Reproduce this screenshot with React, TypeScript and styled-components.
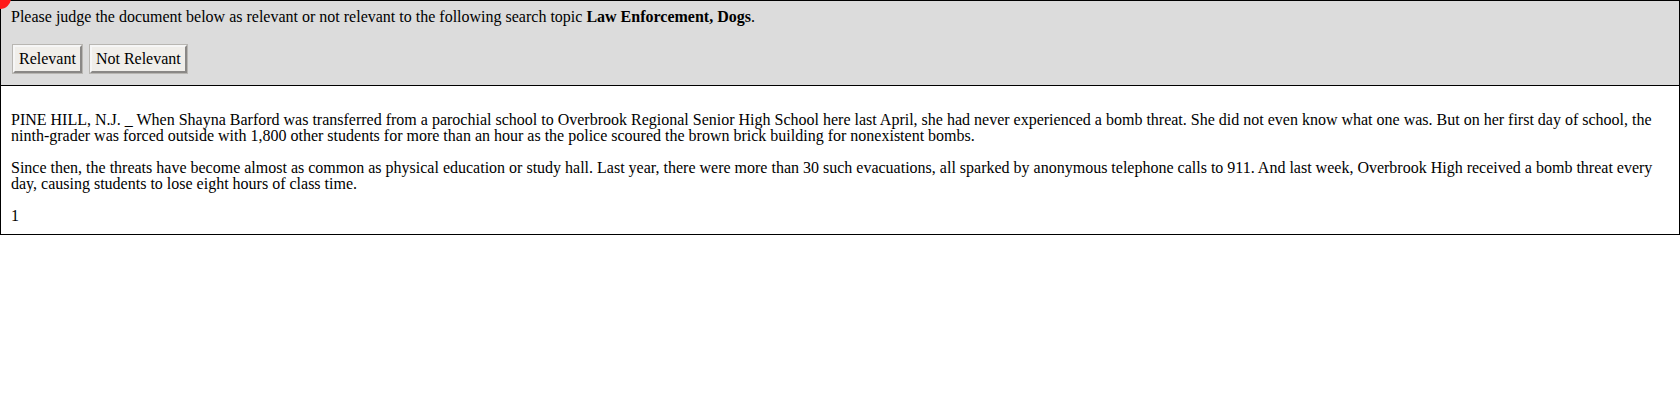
import React from "react";
import styled, { createGlobalStyle } from "styled-components";

const Global = createGlobalStyle`
  html, body { margin: 0; padding: 0; background: #fff; }
  body { font-family: "Liberation Serif", "Times New Roman", serif; font-size: 16px; color: #000; }
  * { box-sizing: border-box; }
`;

const Frame = styled.div`
  position: relative;
  width: 1680px;
  border: 1px solid #000;
`;

const Marker = styled.span`
  position: absolute;
  left: -12px;
  top: -14px;
  width: 22px;
  height: 22px;
  border-radius: 50%;
  background: #ff1a1a;
  z-index: 1;
`;

const Header = styled.div`
  background: #dcdcdc;
  border-bottom: 1px solid #000;
  padding: 8px 10px 12px 10px;
`;

const Prompt = styled.div`
  line-height: 16px;
`;

const Actions = styled.div`
  display: flex;
  gap: 8px;
  margin-top: 20px;
  padding-left: 2px;
`;

const JudgeButton = styled.button`
  font-family: "Liberation Serif", "Times New Roman", serif;
  font-size: 16px;
  line-height: 18px;
  height: 28px;
  padding: 3px 4px;
  background: #f0eeea;
  color: #000;
  border: 2px solid;
  border-top-color: #f6f6f6;
  border-left-color: #f6f6f6;
  border-right-color: #8a8886;
  border-bottom-color: #8a8886;
  box-shadow: 0 0 0 1px #b8b6b2;
  cursor: pointer;
`;

const Doc = styled.div`
  padding: 10px 10px 10px 10px;
`;

const Para = styled.p`
  margin: 16px 0;
  line-height: 16px;
  &:last-child { margin-bottom: 0; }
`;

export default function App() {
  return (
    <>
      <Global />
      <Frame>
        <Marker />
        <Header>
          <Prompt>
            Please judge the document below as relevant or not relevant to the following search topic{" "}
            <b>Law Enforcement, Dogs</b>.
          </Prompt>
          <Actions>
            <JudgeButton>Relevant</JudgeButton>
            <JudgeButton>Not Relevant</JudgeButton>
          </Actions>
        </Header>
        <Doc>
          <Para>
            PINE HILL, N.J. _ When Shayna Barford was transferred from a parochial school to Overbrook Regional Senior High School here last April, she had never experienced a bomb threat. She did not even know what one was. But on her first day of school, the ninth-grader was forced outside with 1,800 other students for more than an hour as the police scoured the brown brick building for nonexistent bombs.
          </Para>
          <Para>
            Since then, the threats have become almost as common as physical education or study hall. Last year, there were more than 30 such evacuations, all sparked by anonymous telephone calls to 911. And last week, Overbrook High received a bomb threat every day, causing students to lose eight hours of class time.
          </Para>
          <Para>1</Para>
        </Doc>
      </Frame>
    </>
  );
}
